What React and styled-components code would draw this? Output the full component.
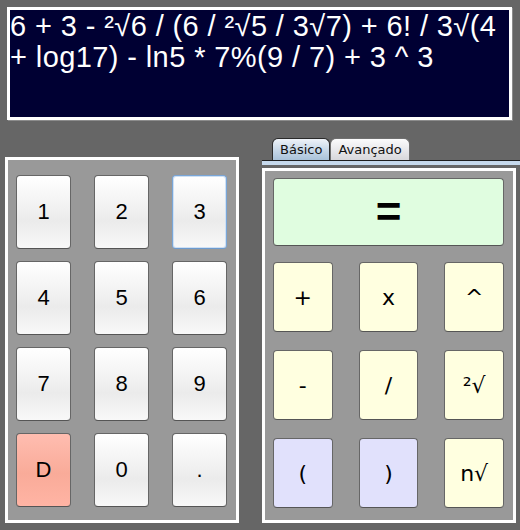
import styled, { createGlobalStyle, css } from 'styled-components';

const GlobalStyle = createGlobalStyle`
  html, body {
    margin: 0;
    padding: 0;
    background: #666666;
  }
  #root {
    width: 520px;
    height: 530px;
  }
`;

const Page = styled.div`
  width: 520px;
  height: 530px;
  box-sizing: border-box;
  padding-top: 7px;
  background: #666666;
  display: flex;
  flex-direction: column;
  overflow: hidden;
`;

const Display = styled.div`
  margin-left: 7px;
  width: 505px;
  height: 113px;
  box-sizing: border-box;
  border: 3px solid #ffffff;
  box-shadow: 1px 1px 0 #8c8c8c;
  background: #000033;
  color: #ffffff;
  font-family: 'Liberation Sans', Arial, sans-serif;
  font-size: 29px;
  letter-spacing: 0.4px;
  line-height: 31px;
  padding: 1px 0 0 0;
  white-space: pre-line;
`;

const Bottom = styled.div`
  display: flex;
  align-items: flex-end;
  margin-top: 18px;
  height: 385px;
  padding-left: 5px;
`;

const Panel = styled.div`
  box-sizing: border-box;
  border: 3px solid #ffffff;
  background: #999999;
`;

const KeyPad = styled(Panel)`
  width: 234px;
  height: 366px;
  padding: 15px 9px 13px 8px;
  display: grid;
  grid-template-columns: repeat(3, 1fr);
  grid-template-rows: repeat(4, 74px);
  column-gap: 23px;
  row-gap: 12px;
`;

const RightCol = styled.div`
  margin-left: 23px;
  width: 258px;
  display: flex;
  flex-direction: column;
`;

const TabBar = styled.div`
  height: 22px;
  display: flex;
  align-items: flex-end;
  padding-left: 10px;
`;

const Tab = styled.div`
  height: 22px;
  box-sizing: border-box;
  padding: 3px 7px 0;
  border: 1px solid ${(p) => (p.$active ? '#2a2a2a' : '#707070')};
  border-bottom: none;
  border-radius: 6px 6px 0 0;
  font-family: 'DejaVu Sans', sans-serif;
  font-size: 13px;
  line-height: 16px;
  color: #111;
  background: ${(p) =>
    p.$active
      ? 'linear-gradient(#eef3f8, #c9d9e9 50%, #a9c2da)'
      : 'linear-gradient(#fbfbfc, #e9e9ec 50%, #d7d7db)'};
`;

const TabLine = styled.div`
  border-top: 1px solid #1e1e1e;
  height: 4px;
  background: #c6d9ec;
  margin-bottom: 3px;
`;

const OpsPanel = styled(Panel)`
  width: 254px;
  height: 355px;
  padding: 7px 9px 12px 8px;
  display: flex;
  flex-direction: column;
`;

const OpsGrid = styled.div`
  margin-top: 16px;
  display: grid;
  grid-template-columns: repeat(3, 1fr);
  grid-template-rows: repeat(3, 70px);
  column-gap: 26px;
  row-gap: 18px;
`;

const tones = {
  digit: css`
    background: linear-gradient(#ffffff, #f1f1f1 45%, #ebebeb 62%, #f8f8f8);
    font-family: 'Liberation Sans', Arial, sans-serif;
  `,
  del: css`
    background: linear-gradient(#ffbdb0, #f9ab99 55%, #ffb4a4);
    font-family: 'Liberation Sans', Arial, sans-serif;
  `,
  op: css`
    background: #ffffe0;
    font-family: 'DejaVu Sans', sans-serif;
  `,
  paren: css`
    background: #e1e1fc;
    font-family: 'DejaVu Sans', sans-serif;
  `,
  eq: css`
    background: #e0fde0;
    font-family: 'Liberation Sans', Arial, sans-serif;
    font-weight: bold;
    font-size: 44px;
    height: 68px;
  `,
};

const Key = styled.button`
  box-sizing: border-box;
  margin: 0;
  padding: 0;
  border: 1px solid ${(p) => (p.$focused ? '#79a6d8' : '#666666')};
  border-bottom-color: ${(p) => (p.$focused ? '#6c9bd0' : '#555555')};
  border-radius: 4px;
  box-shadow: ${(p) => (p.$focused ? 'inset 0 0 0 1px #cfe0f3' : 'none')};
  color: #000;
  font-size: 22px;
  display: flex;
  align-items: center;
  justify-content: center;
  ${(p) => tones[p.$tone]}
`;

const digits = [
  { label: '1' },
  { label: '2' },
  { label: '3', focused: true },
  { label: '4' },
  { label: '5' },
  { label: '6' },
  { label: '7' },
  { label: '8' },
  { label: '9' },
  { label: 'D', tone: 'del' },
  { label: '0' },
  { label: '.' },
];

const ops = [
  { label: '+', tone: 'op' },
  { label: 'x', tone: 'op' },
  { label: '^', tone: 'op' },
  { label: '-', tone: 'op' },
  { label: '/', tone: 'op' },
  { label: '²√', tone: 'op' },
  { label: '(', tone: 'paren' },
  { label: ')', tone: 'paren' },
  { label: 'n√', tone: 'op' },
];

export default function App() {
  return (
    <>
      <GlobalStyle />
      <Page>
        <Display>
          {'6 + 3 - ²√6 / (6 / ²√5 / 3√7) + 6! / 3√(4\n+ log17) - ln5 * 7%(9 / 7) + 3 ^ 3'}
        </Display>
        <Bottom>
          <KeyPad>
            {digits.map((d) => (
              <Key key={d.label} $tone={d.tone || 'digit'} $focused={d.focused}>
                {d.label}
              </Key>
            ))}
          </KeyPad>
          <RightCol>
            <TabBar>
              <Tab $active>Básico</Tab>
              <Tab>Avançado</Tab>
            </TabBar>
            <TabLine />
            <OpsPanel>
              <Key $tone="eq">=</Key>
              <OpsGrid>
                {ops.map((o) => (
                  <Key key={o.label} $tone={o.tone}>
                    {o.label}
                  </Key>
                ))}
              </OpsGrid>
            </OpsPanel>
          </RightCol>
        </Bottom>
      </Page>
    </>
  );
}
